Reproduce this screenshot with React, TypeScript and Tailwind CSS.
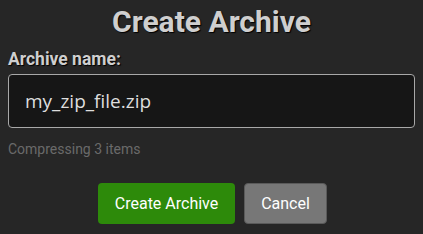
export default function App() {
  return (
    <div className="min-h-screen w-[423px] h-[234px] bg-[#262626] px-2 font-['Roboto',sans-serif]">
      <h1 className="pt-[3px] text-center text-[30px] leading-[38px] font-bold text-[#cfcfcf] [text-shadow:1px_1px_1px_#000]">
        Create Archive
      </h1>
      <label className="mt-[7px] block text-[17.5px] leading-[22px] font-bold text-[#cfcfcf] [text-shadow:1px_1px_1px_#000]">
        Archive name:
      </label>
      <div className="mt-[4px] flex h-[54px] items-center rounded-[4px] border border-[#a8a8a8] bg-[#161616] px-4 font-['Open_Sans',sans-serif] text-[19px] text-[#dedede]">
        my_zip_file.zip
      </div>
      <p className="mt-[13px] text-[14px] leading-[16px] text-[#6a6a6a]">Compressing 3 items</p>
      <div className="mt-[26px] flex justify-center gap-[9px] pl-[2px]">
        <button className="h-[41px] w-[137px] rounded-[4px] bg-[#2d8a0a] text-[16px] text-white">
          Create Archive
        </button>
        <button className="h-[41px] w-[83px] rounded-[4px] border border-[#5a5a5a] bg-[#777777] text-[16px] text-white">
          Cancel
        </button>
      </div>
    </div>
  )
}
